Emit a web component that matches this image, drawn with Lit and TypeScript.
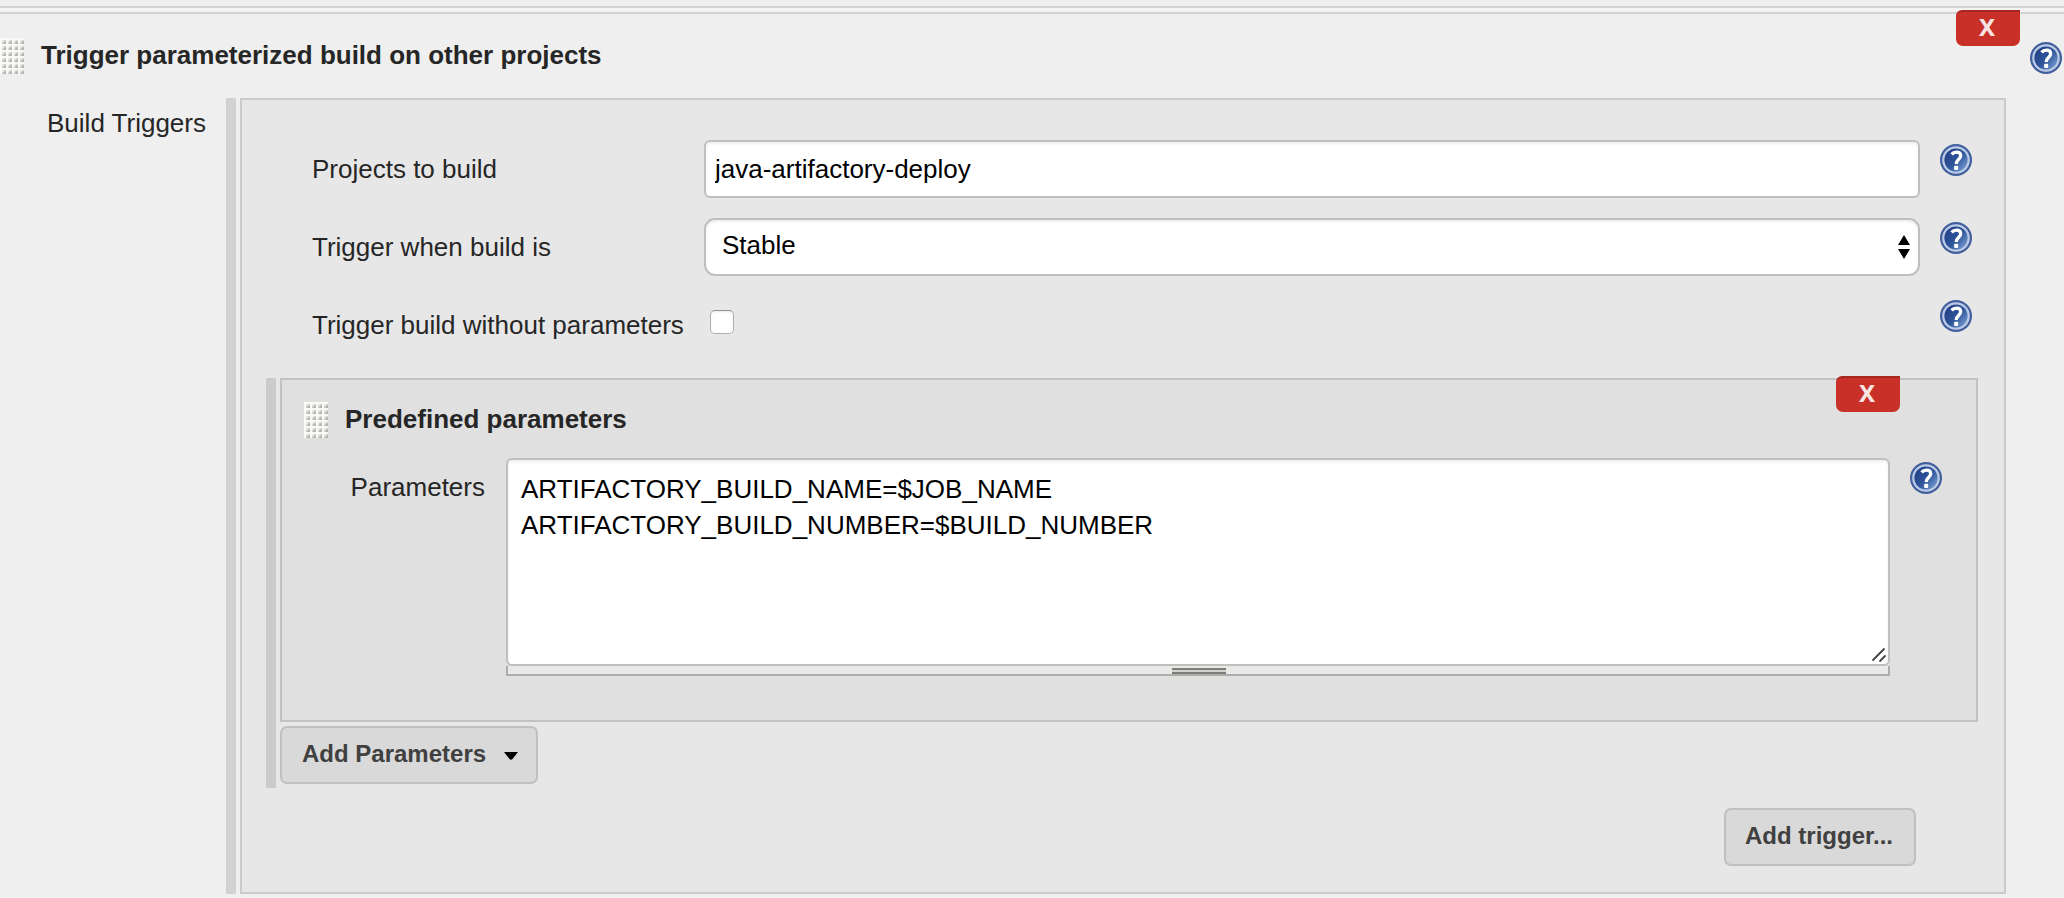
import { LitElement, html, css } from "lit";
import { customElement, property } from "lit/decorators.js";

@customElement("help-icon")
class HelpIcon extends LitElement {
  static styles = css`
    :host { display: block; width: 32px; height: 32px; flex: none; }
    svg { display: block; }
  `;
  render() {
    return html`<svg width="32" height="32" viewBox="0 0 32 32" role="img" aria-label="Help">
      <defs>
        <linearGradient id="g" x1="0.1" y1="0.2" x2="0.9" y2="0.9">
          <stop offset="0" stop-color="#234186" />
          <stop offset="0.5" stop-color="#2f559b" />
          <stop offset="1" stop-color="#7ba0d4" />
        </linearGradient>
      </defs>
      <circle cx="16" cy="16" r="16" fill="#415f9d" />
      <circle cx="16" cy="16" r="12.7" fill="url(#g)" stroke="#bccce7" stroke-width="2.2" />
      <path d="M11.6 10.4C12.8 8.9 14.4 8.2 16.5 8.2C19.3 8.2 20.7 9.6 20.7 11.8C20.7 15.3 16.4 15.2 16.2 20"
        fill="none" stroke="#fff" stroke-width="3.3" />
      <rect x="14.1" y="21.8" width="4.1" height="4.1" rx="1" fill="#fff" />
    </svg>`;
  }
}

@customElement("drag-grip")
class DragGrip extends LitElement {
  static styles = css`
    :host { display: block; flex: none; width: 24px; height: 36px; }
    svg { display: block; }
  `;
  render() {
    return html`<svg width="24" height="36" viewBox="0 0 24 36" aria-hidden="true">
      <defs>
        <linearGradient id="d" x1="0" y1="0" x2="1" y2="1">
          <stop offset="0.2" stop-color="#efefed" />
          <stop offset="1" stop-color="#979793" />
        </linearGradient>
        <pattern id="p" width="6" height="6" patternUnits="userSpaceOnUse">
          <rect width="6" height="6" fill="#fafaf9" />
          <rect x="1.8" y="1.8" width="4.2" height="4.2" rx="0.8" fill="url(#d)" />
        </pattern>
      </defs>
      <rect width="24" height="36" fill="url(#p)" />
    </svg>`;
  }
}

@customElement("remove-button")
class RemoveButton extends LitElement {
  static styles = css`
    button {
      display: block; width: 64px; height: 36px; padding: 0 2px 4px 0; border: 0;
      border-top: 2px solid #a5281f; border-radius: 6px 0 7px 7px;
      background: #c93028; color: #f8e4e2;
      font: bold 24px/30px "Noto Sans", "Open Sans", sans-serif;
    }
  `;
  render() { return html`<button>X</button>`; }
}

@customElement("form-row")
class FormRow extends LitElement {
  @property() label = "";
  static styles = css`
    :host { display: grid; grid-template-columns: 392px 1216px 32px; column-gap: 0; height: 58px; }
    .label { font-size: 26px; line-height: 30px; padding-top: 14px; white-space: nowrap; }
    help-icon { margin: 4px 0 0 20px; }
  `;
  render() {
    return html`<div class="label">${this.label}</div><slot></slot><help-icon></help-icon>`;
  }
}

@customElement("app-root")
class AppRoot extends LitElement {
  static styles = css`
    :host {
      display: flow-root; box-sizing: border-box; width: 2064px; height: 898px; overflow: hidden;
      background: #efefef; color: #262626;
      font-family: "Liberation Sans", Arial, sans-serif; font-size: 26px;
    }
    * { box-sizing: border-box; }
    .rule { height: 8px; border-top: 2px solid #d2d2d2; margin-top: 6px; border-bottom: 2px solid #d2d2d2; background: #f3f3f3; }
    .head { position: relative; display: flex; height: 84px; padding-top: 24px; }
    .title { font-weight: bold; line-height: 30px; white-space: nowrap; }
    .head .title { margin: 2px 0 0 17px; }
    .head help-icon { margin: 4px 2px 0 auto; }
    .head remove-button { position: absolute; right: 44px; top: -4px; }
    .body { display: flex; height: 796px; }
    .side { width: 226px; padding: 10px 20px 0 0; text-align: right; line-height: 30px; }
    .bar { width: 10px; background: #d2d2d2; margin-right: 4px; flex: none; }
    .panel { width: 1766px; border: 2px solid #cacaca; background: #e7e7e7; padding: 40px 26px 0 24px; }
    .rows { display: flex; flex-direction: column; gap: 20px; padding-left: 46px; }
    .text, .select, .area {
      border: 2px solid #bfbfbf; background: #fff; color: #000;
      box-shadow: inset 0 2px 3px #00000012;
    }
    .text { border-radius: 6px; font: inherit; padding: 1px 10px 1px 9px; width: 1216px; height: 58px; }
    .select {
      border-radius: 11px; height: 58px; display: flex; justify-content: space-between;
      padding: 10px 8px 0 16px; line-height: 30px;
    }
    .select svg { margin-top: 5px; }
    .check {
      appearance: none; width: 24px; height: 24px; margin: 14px 0 0 6px;
      border: 1.5px solid #b0b0b0; border-top-color: #959595; border-radius: 5px; background: #fff;
      box-shadow: inset 0 1px 2px #00000018;
    }
    .nested { display: flex; height: 410px; margin-top: 24px; }
    .nested > .bar { background: #cbcbcb; }
    .stack { width: 1698px; display: flex; flex-direction: column; align-items: flex-start; gap: 4px; }
    .box { position: relative; width: 1698px; height: 344px; border: 2px solid #c2c2c2; background: #e0e0e0; padding: 22px 22px 0; }
    .box > remove-button { position: absolute; left: 1554px; top: -4px; }
    .boxhead { display: flex; gap: 17px; height: 56px; }
    .boxhead .title { margin-top: 2px; }
    .param { display: flex; }
    .param .label { width: 202px; padding: 14px 21px 0 0; text-align: right; line-height: 30px; }
    .field { width: 1384px; }
    .area {
      position: relative; display: flex; height: 208px; border-radius: 6px; padding: 11px 13px;
      line-height: 36px; white-space: pre;
    }
    .corner { position: absolute; right: 1px; bottom: 1px; }
    .resize { height: 10px; border: 2px solid #adada9; border-top: 0; background: #e9e9e8; display: flex; justify-content: center; padding: 2px 0 0 2px; }
    .handle { width: 54px; height: 6px; border: solid #7c7c78; border-width: 2px 0; background: #d2d2ce; }
    .param help-icon { margin: 4px 0 0 20px; }
    .button {
      display: flex; height: 58px; align-items: center; border: 2px solid #c0c0c0; border-radius: 7px; background: #d9d9d9;
      color: #404040; font: bold 24px/28px "Liberation Sans", Arial, sans-serif; padding: 0 18px 2px 20px; white-space: nowrap;
    }
    .menu { width: 258px; justify-content: space-between; }
    .menu svg { margin-top: 3px; }
    .foot { display: flex; justify-content: flex-end; margin: 20px 62px 0 0; }
    .foot .button { width: 192px; padding-left: 19px; }
  `;

  private text = "ARTIFACTORY_BUILD_NAME=$JOB_NAME\nARTIFACTORY_BUILD_NUMBER=$BUILD_NUMBER";

  render() {
    return html`
      <div class="rule"></div>
      <header class="head">
        <drag-grip></drag-grip>
        <div class="title">Trigger parameterized build on other projects</div>
        <help-icon></help-icon>
        <remove-button></remove-button>
      </header>
      <main class="body">
        <div class="side">Build Triggers</div>
        <div class="bar"></div>
        <section class="panel">
          <div class="rows">
            <form-row label="Projects to build">
              <input class="text" value="java-artifactory-deploy" />
            </form-row>
            <form-row label="Trigger when build is">
              <div class="select">
                Stable
                <svg width="12" height="24" viewBox="0 0 12 24"><path d="M0 10L6 0L12 10ZM0 14H12L6 24Z" /></svg>
              </div>
            </form-row>
            <form-row label="Trigger build without parameters">
              <input class="check" type="checkbox" />
            </form-row>
          </div>
          <div class="nested">
            <div class="bar"></div>
            <div class="stack">
              <div class="box">
                <div class="boxhead">
                  <drag-grip></drag-grip>
                  <div class="title">Predefined parameters</div>
                </div>
                <remove-button></remove-button>
                <div class="param">
                  <div class="label">Parameters</div>
                  <div class="field">
                    <div class="area">${this.text}<svg class="corner" width="16" height="16" viewBox="0 0 16 16" stroke="#444" stroke-width="1.8" stroke-linecap="round"><path d="M2 13L13 2M9 14L14 9" /></svg></div>
                    <div class="resize"><div class="handle"></div></div>
                  </div>
                  <help-icon></help-icon>
                </div>
              </div>
              <button class="button menu">
                Add Parameters
                <svg width="14" height="8" viewBox="0 0 14 8"><path d="M0 0H14L8.5 7Q7 8.5 5.5 7Z" /></svg>
              </button>
            </div>
          </div>
          <div class="foot"><button class="button">Add trigger...</button></div>
        </section>
      </main>
    `;
  }
}
